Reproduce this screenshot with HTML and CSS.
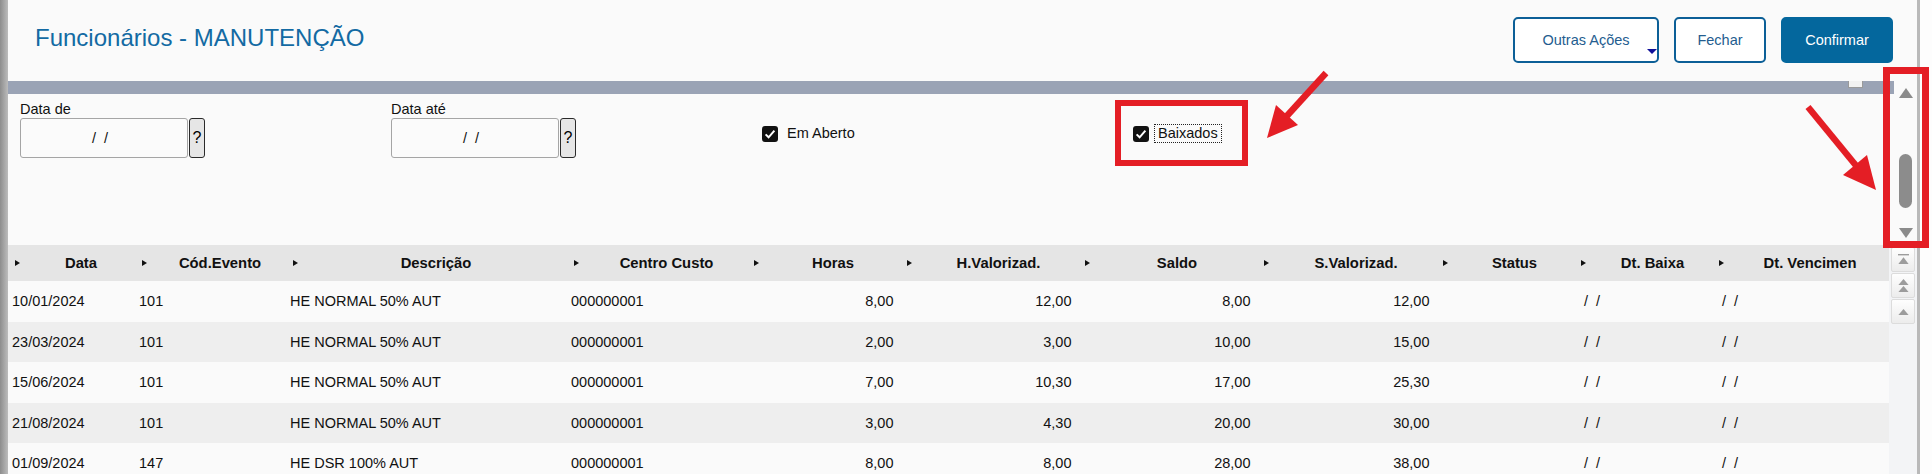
FILE: index.html
```html
<!DOCTYPE html>
<html lang="pt-BR">
<head>
<meta charset="utf-8">
<title>Funcionários - MANUTENÇÃO</title>
<link rel="stylesheet" href="styles.css">
</head>
<body>
<div class="screen">
  <div class="edge-left"></div>
  <div class="main">
    <header class="topbar">
      <h1 class="title">Funcionários - MANUTENÇÃO</h1>
      <div class="actions">
        <button class="btn btn-outline btn-menu">Outras Ações<span class="caret"></span></button>
        <button class="btn btn-outline btn-close">Fechar</button>
        <button class="btn btn-primary">Confirmar</button>
      </div>
    </header>

    <section class="filters">
      <div class="filters-body">
        <div class="bar"><span class="bar-box"></span></div>
        <div class="fields">
          <div class="field">
            <span class="field-label">Data de</span>
            <div class="date-input"><span class="date-box">/&nbsp; /</span><span class="help-btn">?</span></div>
          </div>
          <div class="field">
            <span class="field-label">Data até</span>
            <div class="date-input"><span class="date-box">/&nbsp; /</span><span class="help-btn">?</span></div>
          </div>
          <label class="check">
            <span class="check-box"><svg width="16" height="16" viewBox="0 0 16 16"><path d="M3.6 8.4 L6.6 11.3 L12.4 4.6" fill="none" stroke="#fff" stroke-width="2"/></svg></span>
            <span class="check-text">Em Aberto</span>
          </label>
          <label class="check">
            <span class="check-box"><svg width="16" height="16" viewBox="0 0 16 16"><path d="M3.6 8.4 L6.6 11.3 L12.4 4.6" fill="none" stroke="#fff" stroke-width="2"/></svg></span>
            <span class="check-text focus">Baixados</span>
          </label>
        </div>
      </div>
      <div class="vscroll">
        <span class="sb-up"></span>
        <span class="sb-thumb"></span>
        <span class="sb-down"></span>
      </div>
    </section>

    <section class="grid-wrap">
      <div class="grid">
        <div class="grid-row grid-head">
          <div class="gh"><span>Data</span></div>
          <div class="gh"><span>Cód.Evento</span></div>
          <div class="gh"><span>Descrição</span></div>
          <div class="gh"><span>Centro Custo</span></div>
          <div class="gh"><span>Horas</span></div>
          <div class="gh"><span>H.Valorizad.</span></div>
          <div class="gh"><span>Saldo</span></div>
          <div class="gh"><span>S.Valorizad.</span></div>
          <div class="gh"><span>Status</span></div>
          <div class="gh"><span>Dt. Baixa</span></div>
          <div class="gh"><span>Dt. Vencimen</span></div>
        </div>
        <div class="grid-row grid-line">
          <div class="gc">10/01/2024</div><div class="gc">101</div><div class="gc">HE NORMAL 50% AUT</div><div class="gc">000000001</div>
          <div class="gc num">8,00</div><div class="gc num">12,00</div><div class="gc num">8,00</div><div class="gc num">12,00</div>
          <div class="gc"></div><div class="gc dt">/&nbsp; /</div><div class="gc dt">/&nbsp; /</div>
        </div>
        <div class="grid-row grid-line">
          <div class="gc">23/03/2024</div><div class="gc">101</div><div class="gc">HE NORMAL 50% AUT</div><div class="gc">000000001</div>
          <div class="gc num">2,00</div><div class="gc num">3,00</div><div class="gc num">10,00</div><div class="gc num">15,00</div>
          <div class="gc"></div><div class="gc dt">/&nbsp; /</div><div class="gc dt">/&nbsp; /</div>
        </div>
        <div class="grid-row grid-line">
          <div class="gc">15/06/2024</div><div class="gc">101</div><div class="gc">HE NORMAL 50% AUT</div><div class="gc">000000001</div>
          <div class="gc num">7,00</div><div class="gc num">10,30</div><div class="gc num">17,00</div><div class="gc num">25,30</div>
          <div class="gc"></div><div class="gc dt">/&nbsp; /</div><div class="gc dt">/&nbsp; /</div>
        </div>
        <div class="grid-row grid-line">
          <div class="gc">21/08/2024</div><div class="gc">101</div><div class="gc">HE NORMAL 50% AUT</div><div class="gc">000000001</div>
          <div class="gc num">3,00</div><div class="gc num">4,30</div><div class="gc num">20,00</div><div class="gc num">30,00</div>
          <div class="gc"></div><div class="gc dt">/&nbsp; /</div><div class="gc dt">/&nbsp; /</div>
        </div>
        <div class="grid-row grid-line">
          <div class="gc">01/09/2024</div><div class="gc">147</div><div class="gc">HE DSR 100% AUT</div><div class="gc">000000001</div>
          <div class="gc num">8,00</div><div class="gc num">8,00</div><div class="gc num">28,00</div><div class="gc num">38,00</div>
          <div class="gc"></div><div class="gc dt">/&nbsp; /</div><div class="gc dt">/&nbsp; /</div>
        </div>
      </div>
      <div class="grid-nav">
        <span class="nav-btn"><svg width="11" height="11" viewBox="0 0 11 11"><rect x="0" y="0" width="11" height="1.4" fill="#9c9c9c"/><path d="M5.5 3.2 L10.6 10 L0.4 10Z" fill="#9c9c9c"/></svg></span>
        <span class="nav-btn"><svg width="11" height="13" viewBox="0 0 11 13"><path d="M5.5 0 L10.6 6 L0.4 6Z M5.5 7 L10.6 13 L0.4 13Z" fill="#9c9c9c"/></svg></span>
        <span class="nav-btn"><svg width="11" height="6" viewBox="0 0 11 6"><path d="M5.5 0 L10.6 6 L0.4 6Z" fill="#9c9c9c"/></svg></span>
      </div>
    </section>
  </div>
  <div class="edge-right"></div>

  <div class="annot">
    <span class="mark mark-check"></span>
    <span class="mark mark-scroll"></span>
    <svg class="arrows" width="1932" height="474" viewBox="0 0 1932 474">
      <line x1="1326" y1="73" x2="1285" y2="118" stroke="#e41e25" stroke-width="6.5"/>
      <polygon points="1276,105 1298,125 1267,138" fill="#e41e25"/>
      <line x1="1808" y1="107" x2="1858" y2="168" stroke="#e41e25" stroke-width="6.5"/>
      <polygon points="1867,155 1843,175 1876,190" fill="#e41e25"/>
    </svg>
  </div>
</div>
</body>
</html>
```

FILE: styles.css
```css
html, body {
  margin: 0;
  padding: 0;
}

body {
  font-family: "Liberation Sans", Arial, sans-serif;
  color: #111;
  background: #fafafa;
}

.screen {
  position: relative;
  display: flex;
  width: 1932px;
  height: 474px;
  overflow: hidden;
  background: #fafafa;
}

.edge-left {
  flex: none;
  width: 8px;
  background: linear-gradient(90deg, #8d8d8d, #bcbcbc);
}

.main {
  flex: none;
  width: 1909px;
  display: flex;
  flex-direction: column;
}

.edge-right {
  flex: none;
  width: 15px;
  box-sizing: border-box;
  border-left: 3px solid #b9b9b9;
  background: #fdfdfd;
}

/* ---------- top bar ---------- */
.topbar {
  flex: none;
  height: 81px;
  display: flex;
  justify-content: space-between;
  align-items: flex-start;
  padding: 0 24px 0 27px;
  box-sizing: border-box;
}

.title {
  margin: 15px 0 0;
  font-size: 24px;
  font-weight: normal;
  line-height: 46px;
  color: #136aa3;
}

.actions {
  display: flex;
  gap: 15px;
  margin-top: 17px;
}

.btn {
  position: relative;
  height: 46px;
  box-sizing: border-box;
  border-radius: 5px;
  padding: 0;
  font-family: "Liberation Sans", Arial, sans-serif;
  font-size: 14.5px;
}

.btn-outline {
  border: 2px solid #0c5f97;
  background: #fff;
  color: #245d8f;
}

.btn-menu {
  width: 146px;
}

.btn-close {
  width: 92px;
}

.btn-primary {
  width: 112px;
  border: 2px solid #04679d;
  background: #04679d;
  color: #fff;
}

.caret {
  position: absolute;
  left: 132px;
  top: 30px;
  width: 0;
  height: 0;
  border-top: 5px solid #10109a;
  border-left: 5px solid transparent;
  border-right: 5px solid transparent;
}

/* ---------- filters ---------- */
.filters {
  flex: none;
  height: 164px;
  display: flex;
}

.filters-body {
  flex: 1;
  display: flex;
  flex-direction: column;
}

.bar {
  position: relative;
  flex: none;
  height: 13px;
  background: #9aa3b5;
}

.bar-box {
  position: absolute;
  right: 31px;
  top: 0;
  width: 15px;
  height: 7px;
  box-sizing: border-box;
  background: #f2f2f2;
  border: 1px solid #9a9a9a;
  border-top: none;
}

.fields {
  display: grid;
  grid-template-columns: repeat(4, 371px);
  align-items: start;
  padding: 7px 0 0 12px;
}

.field-label {
  display: block;
  font-size: 14.5px;
  line-height: 17px;
  color: #111;
}

.date-input {
  display: flex;
  gap: 1px;
}

.date-box {
  width: 168px;
  height: 40px;
  box-sizing: border-box;
  border: 1px solid #a5a5a5;
  border-radius: 3px;
  background: #fbfbfb;
  display: flex;
  align-items: center;
  justify-content: center;
  padding-right: 8px;
  font-size: 14.5px;
}

.help-btn {
  width: 16px;
  height: 40px;
  box-sizing: border-box;
  border: 1px solid #2a2a2a;
  border-radius: 3px;
  background: #e6e6e6;
  display: flex;
  align-items: center;
  justify-content: center;
  font-size: 16px;
  color: #000;
}

.check {
  display: flex;
  align-items: center;
  margin-top: 23px;
  font-size: 14.5px;
}

.check-box {
  flex: none;
  width: 16px;
  height: 16px;
  border-radius: 3px;
  background: #111;
  display: flex;
}

.check-text {
  margin-left: 5px;
  padding: 0 3px;
  line-height: 17px;
  border: 1px dotted transparent;
}

.check-text.focus {
  border-color: #222;
}

/* ---------- vertical scrollbar ---------- */
.vscroll {
  flex: none;
  width: 23px;
  display: flex;
  flex-direction: column;
  align-items: center;
  padding-top: 7px;
  box-sizing: border-box;
}

.sb-up {
  width: 0;
  height: 0;
  border-bottom: 10px solid #8b8b8b;
  border-left: 7.5px solid transparent;
  border-right: 7.5px solid transparent;
}

.sb-thumb {
  width: 13px;
  height: 54px;
  margin-top: 56px;
  border-radius: 7px;
  background: #8c8c8c;
}

.sb-down {
  width: 0;
  height: 0;
  margin-top: 20px;
  border-top: 10px solid #8b8b8b;
  border-left: 7.5px solid transparent;
  border-right: 7.5px solid transparent;
}

/* ---------- grid ---------- */
.grid-wrap {
  flex: 1;
  display: flex;
  min-height: 0;
}

.grid {
  flex: none;
  width: 1881px;
}

.grid-row {
  display: grid;
  grid-template-columns: 127px 151px 281px 180px 153px 178px 179px 179px 138px 138px 177px;
}

.grid-head {
  height: 36px;
  background: #e5e5e5;
  font-weight: bold;
  font-size: 14.8px;
  color: #111;
}

.gh {
  display: flex;
  align-items: center;
  white-space: nowrap;
}

.gh::before {
  content: "";
  flex: none;
  width: 0;
  height: 0;
  margin: 0 7px;
  border-left: 5px solid #111;
  border-top: 3.5px solid transparent;
  border-bottom: 3.5px solid transparent;
}

.gh span {
  flex: 1;
  text-align: center;
}

.grid-line {
  height: 40.5px;
  background: #fafafa;
}

.grid-line:nth-child(odd) {
  background: #eeeeee;
}

.gc {
  display: flex;
  align-items: center;
  padding: 0 4px;
  font-size: 14.5px;
  white-space: nowrap;
  overflow: hidden;
  color: #111;
}

.gc.num {
  justify-content: flex-end;
  padding-right: 6.5px;
}

.gc.dt {
  padding-left: 10px;
}

.grid-nav {
  flex: 1;
  display: flex;
  flex-direction: column;
  gap: 1px;
  padding: 2px 2px 0 2px;
  background: #f3f4f6;
}

.nav-btn {
  height: 25px;
  box-sizing: border-box;
  border: 1px solid #dcdcdc;
  border-radius: 2px;
  background: linear-gradient(#fefefe, #ececec);
  display: flex;
  align-items: center;
  justify-content: center;
}

/* ---------- annotations ---------- */
.annot {
  position: absolute;
  inset: 0;
  pointer-events: none;
}

.mark {
  position: absolute;
  box-sizing: border-box;
  border: 6px solid #e41e25;
}

.mark-check {
  left: 1115px;
  top: 100px;
  width: 133px;
  height: 66px;
}

.mark-scroll {
  left: 1883px;
  top: 67px;
  width: 46px;
  height: 181px;
  border-width: 7px;
}

.arrows {
  position: absolute;
  left: 0;
  top: 0;
}
```
